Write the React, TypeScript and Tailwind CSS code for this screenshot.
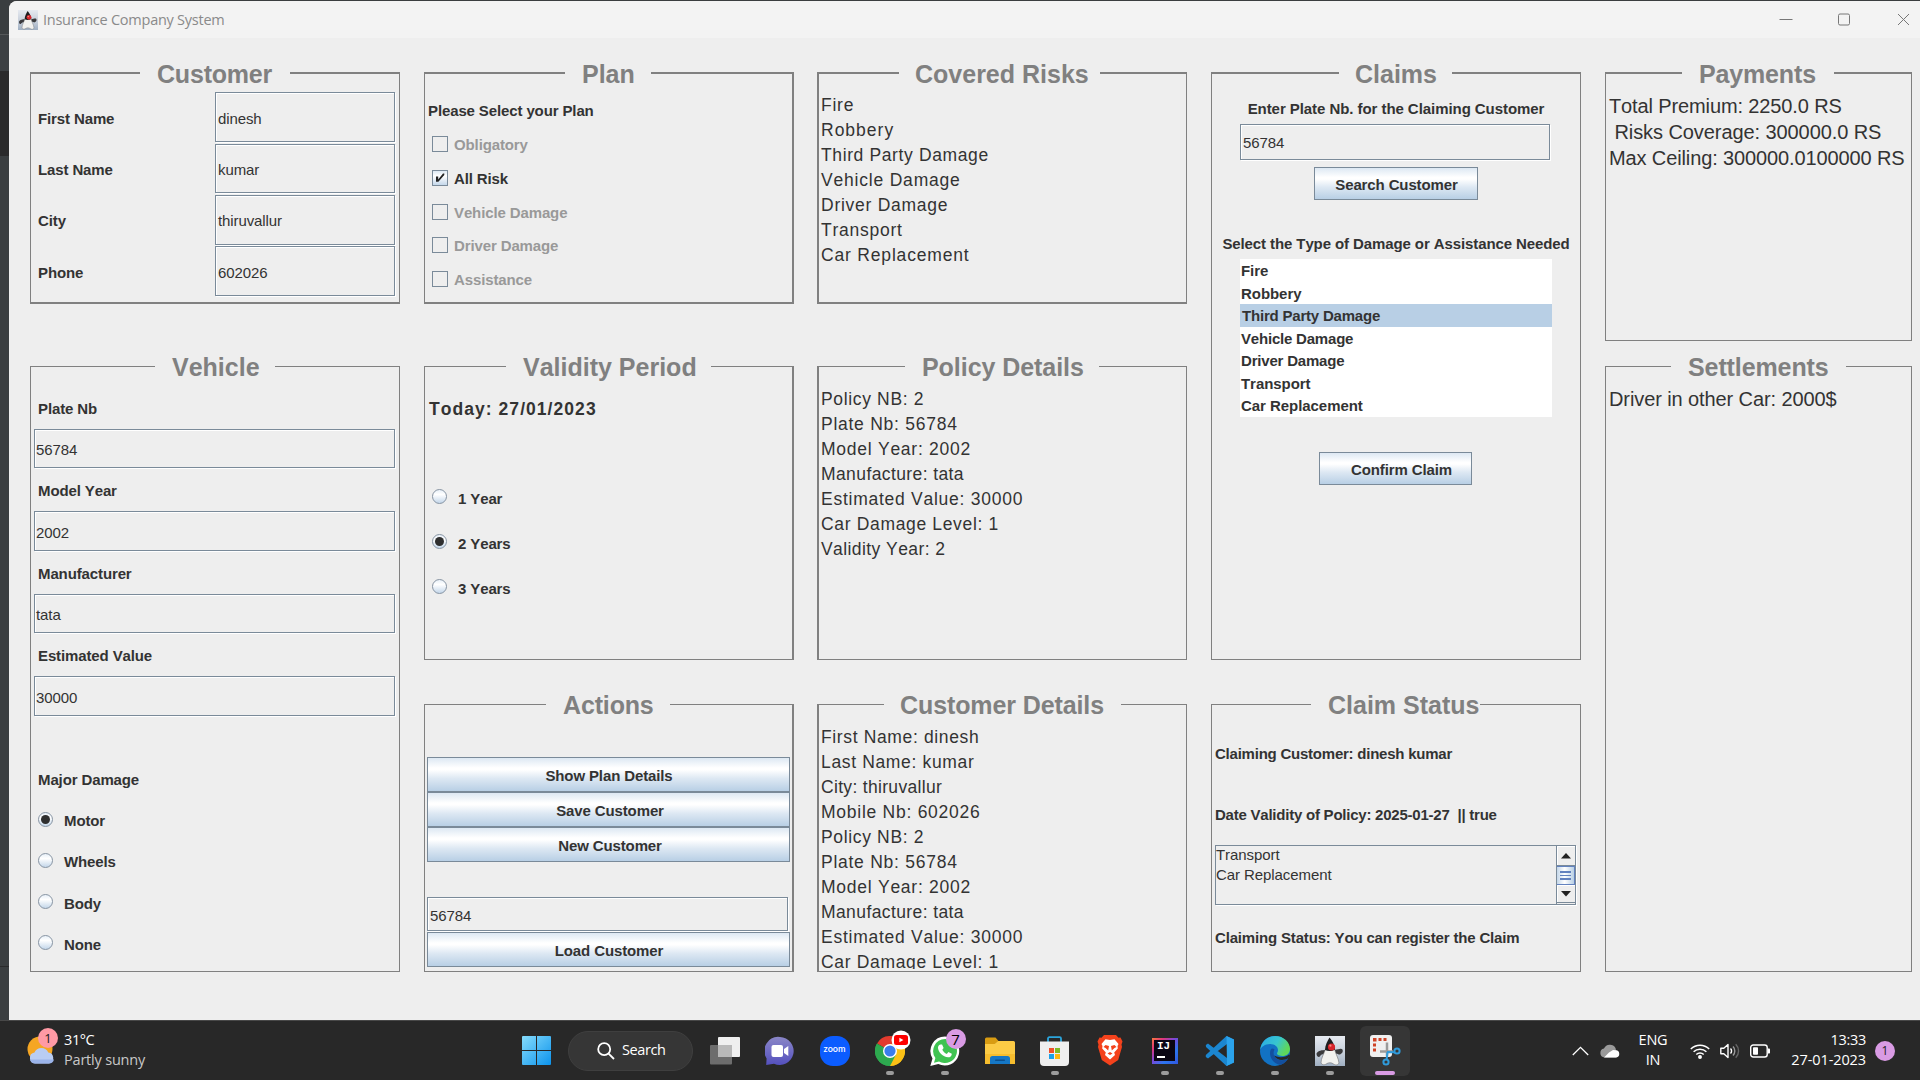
import type { ReactNode } from "react";

const INK = "text-[#333333]";

/* ---------- Metal look-and-feel widgets ---------- */

function Panel({
  title,
  className,
  left,
  gap,
  topLine = "border-t",
  titleClass = "-mt-[14px]",
  children,
}: {
  title: string;
  className: string;
  left: string;
  gap: string;
  topLine?: string;
  titleClass?: string;
  children: ReactNode;
}) {
  return (
    <section className={`flex shrink-0 flex-col border-[#808080] ${className}`}>
      <div className="flex h-0 shrink-0 items-start">
        <div className={`shrink-0 border-[#808080] ${topLine} ${left}`} />
        <h2
          className={`shrink-0 text-[25px] font-bold leading-[30px] whitespace-pre text-[#808080] ${gap} ${titleClass}`}
        >
          {title}
        </h2>
        <div className={`flex-1 border-[#808080] ${topLine}`} />
      </div>
      {children}
    </section>
  );
}

function Label({
  children,
  className = "",
  tracking = "tracking-[-0.12px]",
}: {
  children: ReactNode;
  className?: string;
  tracking?: string;
}) {
  return (
    <div className={`text-[15px] font-bold leading-5 whitespace-pre ${INK} ${tracking} ${className}`}>{children}</div>
  );
}

function Field({ value, className, pad = "pl-[2px]" }: { value: string; className: string; pad?: string }) {
  return (
    <div
      className={`flex shrink-0 items-center border border-[#7a8a99] text-[15px] leading-5 tracking-[-0.1px] shadow-[inset_1px_1px_0_#ffffff,1px_1px_0_#ffffff] ${pad} ${INK} ${className}`}
    >
      {value}
    </div>
  );
}

function MetalButton({ label, className }: { label: string; className: string }) {
  return (
    <button
      className={`flex shrink-0 items-center justify-center border border-[#7a8a99] bg-[linear-gradient(to_bottom,#dde8f3_0%,#ffffff_30%,#ffffff_36%,#dde8f3_62%,#b8cfe5_100%)] pt-[2px] text-[15px] font-bold leading-5 tracking-[-0.12px] ${INK} ${className}`}
    >
      {label}
    </button>
  );
}

function Radio({ label, checked }: { label: string; checked?: boolean }) {
  return (
    <div className="flex items-center">
      <span className="-mt-[4px] flex h-[15px] w-[15px] items-center justify-center rounded-full border-[1.5px] border-[#8794a3] bg-[linear-gradient(to_bottom,#e8f0f8,#ffffff_35%,#c4d7ea)]">
        {checked && <span className="h-[9px] w-[9px] rounded-full bg-[#2f2f2f]" />}
      </span>
      <Label className="ml-[11px]">{label}</Label>
    </div>
  );
}

function Check({ label, checked }: { label: string; checked?: boolean }) {
  return (
    <div className="flex h-[33.75px] items-start">
      <span
        className={`flex h-4 w-4 items-center justify-center border border-[#7a8a99] ${
          checked ? "bg-[linear-gradient(to_bottom,#dde8f3,#ffffff_35%,#c4d7ea)]" : ""
        }`}
      >
        {checked && (
          <svg width="12" height="12" viewBox="0 0 12 12">
            <path d="M2 4.500h2.200v3L9 1.500h1.300v1.400L4.400 9.800H2z" fill="#222" />
          </svg>
        )}
      </span>
      <Label className={`ml-[6px] -mt-[1px] ${checked ? "" : "!text-[#999999]"}`}>{label}</Label>
    </div>
  );
}

const lineTracking: Record<string, string> = {
  Robbery: "tracking-[1px]",
  "Third Party Damage": "tracking-[0.62px]",
  "Vehicle Damage": "tracking-[0.8px]",
  "Car Replacement": "tracking-[0.82px]",
  "Manufacture: tata": "tracking-[0.4px]",
  "Validity Year: 2": "tracking-[0.42px]",
  "City: thiruvallur": "tracking-[0.32px]",
  "First Name: dinesh": "tracking-[0.64px]",
  "Last Name: kumar": "tracking-[0.65px]",
  "Policy NB: 2": "tracking-[0.65px]",
  "Car Damage Level: 1": "tracking-[0.66px]",
};

function TextLines({ lines, className = "" }: { lines: string[]; className?: string }) {
  return (
    <div className={`overflow-hidden pl-[2px] text-[17.5px] leading-[25px] ${INK} ${className}`}>
      {lines.map((l) => (
        <div key={l} className={`whitespace-pre ${lineTracking[l] ?? "tracking-[0.74px]"}`}>
          {l}
        </div>
      ))}
    </div>
  );
}

/* ---------- Icons ---------- */

function Duke({ size }: { size: number }) {
  return (
    <svg width={size} height={size} viewBox="0 0 30 30">
      <defs>
        <linearGradient id="dukeBg" x1="0" y1="0" x2="0" y2="1">
          <stop offset="0" stopColor="#e6eaf0" />
          <stop offset=".6" stopColor="#c3ccd8" />
          <stop offset="1" stopColor="#9fafc2" />
        </linearGradient>
      </defs>
      <rect width="30" height="30" fill="url(#dukeBg)" />
      <path d="M11 14C7 14 3 14.500 1.500 17.500c0 2 1 3.500 2.500 3.500 1.500-.5 1-2.500 5-3z" fill="#3a3a3c" />
      <path d="M19.500 14c4-.5 6.500-2 8-.5 1 2-.5 4-2.500 5-1.500.5-2-1-4.500-1z" fill="#3a3a3c" />
      <path d="M10.500 13C9 18 6 22 6 27c1.500 2.500 4 2 6 .5 2-1 4.500-1 6 .2 2 1.500 5 2 6-.7C23.500 22 20.500 18 19.500 13z" fill="#f2f2ef" stroke="#6f6f70" strokeWidth=".6" />
      <path d="M14.500 1.500c2.500 3 5.500 7.500 5.500 12-3 2-7 2-10 .5 0-5 2.500-9 4.500-12.500z" fill="#1d1d1f" />
      <circle cx="16.500" cy="11" r="3.600" fill="#d8252b" />
      <circle cx="15.400" cy="9.700" r="1.100" fill="#f58a85" />
    </svg>
  );
}

function WindowsLogo() {
  return (
    <svg width="29" height="29" viewBox="0 0 29 29">
      <defs>
        <linearGradient id="win" x1="0" y1="0" x2="1" y2="1">
          <stop offset="0" stopColor="#86dcfc" />
          <stop offset="1" stopColor="#0c93ec" />
        </linearGradient>
      </defs>
      <path d="M1 0h13v14H0V1a1 1 0 0 1 1-1zM15 0h13a1 1 0 0 1 1 1v13H15zM0 15h14v14H1a1 1 0 0 1-1-1zM15 15h14v13a1 1 0 0 1-1 1H15z" fill="url(#win)" />
    </svg>
  );
}

function TaskView() {
  return (
    <svg width="30" height="28" viewBox="0 0 30 28">
      <rect x="8" y="0" width="22" height="20" rx="1" fill="#efefef" />
      <rect x="0" y="8" width="22" height="19.500" rx="1" fill="#6d6d6d" />
      <rect x="8" y="8" width="14" height="12" fill="#b9b9b9" />
    </svg>
  );
}

function Chat() {
  return (
    <svg width="30" height="30" viewBox="0 0 30 30">
      <defs>
        <linearGradient id="chat" x1="0" y1="0" x2="0" y2="1">
          <stop offset="0" stopColor="#8a86c6" />
          <stop offset=".5" stopColor="#706cc4" />
          <stop offset="1" stopColor="#5450bd" />
        </linearGradient>
      </defs>
      <path d="M15 1a14 14 0 1 1-6 26.800L1.200 29l.4-6.500A14 14 0 0 1 15 1z" fill="url(#chat)" />
      <rect x="6.500" y="9" width="11.500" height="12" rx="2" fill="#fff" />
      <path d="M19 13l4.300-3v10L19 17z" fill="#fff" />
    </svg>
  );
}

function Zoom() {
  return (
    <div className="flex h-[30px] w-[30px] items-center justify-center rounded-[13px] bg-[#0b5cff]">
      <span className="mb-[3px] font-['Lato'] text-[9px] font-semibold leading-3 text-white">zoom</span>
    </div>
  );
}

function Chrome() {
  return (
    <div className="relative h-[30px] w-[30px]">
      <svg width="30" height="30" viewBox="0 0 30 30">
        <path d="M15 15L2 7.500A15 15 0 0 1 28 7.500z" fill="#e33b2e" />
        <path d="M15 15L28 7.500A15 15 0 0 1 15 30z" fill="#fbc116" />
        <path d="M15 15v15A15 15 0 0 1 2 7.500z" fill="#2da94f" />
        <path d="M15 8h13.200a15 15 0 0 1-13.200 22l6.200-11.500z" fill="#fbc116" />
        <path d="M9 18.500L2 7.500A15 15 0 0 0 15 30l6-11.500z" fill="#2da94f" />
        <circle cx="15" cy="15" r="7" fill="#fff" />
        <circle cx="15" cy="15" r="5.600" fill="#3b7ded" />
      </svg>
      <svg width="20" height="20" viewBox="0 0 20 20" className="absolute -top-[6px] left-[16px]">
        <circle cx="10" cy="10" r="9.500" fill="#fff" />
        <rect x="3" y="5" width="14" height="10" rx="2.500" fill="#f00" />
        <path d="M8.400 7.700v4.600l4-2.300z" fill="#fff" />
      </svg>
    </div>
  );
}

function WhatsApp() {
  return (
    <div className="relative h-[30px] w-[30px]">
      <svg width="30" height="30" viewBox="0 0 30 30">
        <path d="M15 .5A14.500 14.500 0 1 1 8.300 28L.3 30l2.200-7.600A14.500 14.500 0 0 1 15 .5z" fill="#fff" />
        <path d="M15 3a12 12 0 1 1-6 22.400l-5 1.300 1.400-4.800A12 12 0 0 1 15 3z" fill="#3fc351" />
        <path d="M10.800 8.500l1.300.1 1.500 3.400-1.300 1.800c1 2 2.400 3.300 4.500 4.200l1.600-1.900 3.400 1.600c0 2.500-1.700 3.600-3.700 3.600-5 0-10.300-5.500-10.100-9.700.1-1.600 1-3 2.800-3.100z" fill="#fff" />
      </svg>
      <span className="absolute -top-[7px] left-[16px] flex h-5 w-5 items-center justify-center rounded-full bg-[#d99be4] text-[15px] leading-5 text-black">
        7
      </span>
    </div>
  );
}

function Explorer() {
  return (
    <svg width="30" height="28" viewBox="0 0 30 28">
      <path d="M0 2a1.500 1.500 0 0 1 1.500-1.500h9L13.500 4 10 7H0z" fill="#d99c12" />
      <path d="M0 7h9.500l3.500-3h15.500A1.500 1.500 0 0 1 30 5.500V27H0z" fill="#fccb45" />
      <path d="M0 17h30v10H0z" fill="#f6bd2e" />
      <path d="M5 27v-5.500A2.500 2.500 0 0 1 7.500 19h15a2.500 2.500 0 0 1 2.500 2.500V27z" fill="#1577c6" />
      <rect x="10" y="22.500" width="10" height="1.500" rx=".7" fill="#0b4f8e" />
    </svg>
  );
}

function Store() {
  return (
    <svg width="29" height="30" viewBox="0 0 29 30">
      <path d="M8 6V2.500A1.300 1.300 0 0 1 9.300 1.200h10.400A1.300 1.300 0 0 1 21 2.500V6" fill="none" stroke="#2ba5dc" strokeWidth="1.800" />
      <path d="M0 5.500h29V26a4 4 0 0 1-4 4H4a4 4 0 0 1-4-4z" fill="#efefef" />
      <rect x="9" y="12" width="5" height="5" fill="#f0512a" />
      <rect x="15" y="12" width="5" height="5" fill="#7fba27" />
      <rect x="9" y="18" width="5" height="5" fill="#1ca1e8" />
      <rect x="15" y="18" width="5" height="5" fill="#fdb813" />
    </svg>
  );
}

function Brave() {
  return (
    <svg width="26" height="31" viewBox="0 0 26 31">
      <path d="M7 0h12l2.500 2.700 2-.2 2 4-1 3L25 12l-3.800 13L13 30.500 4.800 25 1 12l.5-2.500-1-3 2-4 2 .2z" fill="#f4421c" />
      <path d="M13 5l4.500-.8L21.500 9l-1 2 .3 2.500-3.600 4 .8 2.500-5 4.500L8 20l.8-2.500-3.600-4 .3-2.500-1-2 4-4.800z" fill="#fff" />
      <path d="M8.500 10l3.500 1-.8 4.500L8.500 13l-2-1zM17.500 10l-3.500 1 .8 4.500 2.700-2.500 2-1zM10.500 18.500L13 17l2.500 1.500L13 20z" fill="#f4421c" />
    </svg>
  );
}

function IntelliJ() {
  return (
    <div className="flex h-[26px] w-[26px] items-center justify-center bg-[linear-gradient(135deg,#f97a3c_0%,#e0367a_22%,#7a47d8_45%,#2c76f0_70%,#3156e0_100%)]">
      <div className="flex h-[21px] w-[21px] flex-col bg-[#0a0614] pl-[3px] pt-[1px]">
        <span className="font-['Liberation_Mono'] text-[11px] font-bold leading-[11px] text-white">IJ</span>
        <span className="mt-[4px] h-[1.5px] w-[8px] bg-white" />
      </div>
    </div>
  );
}

function VsCode() {
  return (
    <svg width="30" height="30" viewBox="0 0 30 30">
      <path d="M21.500 0L29 3.500v23L21.500 30 1 11 .8 9 3 7.600 22 22V8L3 22.400.8 21V19z" fill="#1b86d0" />
      <path d="M21.500 0L29 3.500v23L21.500 30l.5-2z" fill="#2ba3ec" />
    </svg>
  );
}

function Edge() {
  return (
    <svg width="30" height="30" viewBox="0 0 30 30">
      <defs>
        <linearGradient id="edgeA" x1="0" y1="0" x2="1" y2=".4">
          <stop offset="0" stopColor="#2aa8e6" />
          <stop offset=".6" stopColor="#37c6cf" />
          <stop offset="1" stopColor="#5fd75a" />
        </linearGradient>
      </defs>
      <circle cx="15" cy="15" r="15" fill="#1272c4" />
      <path d="M.2 14C1 6 7 0 15 0c9 0 15 6.500 15 13 0 4.500-3.500 7-7.500 7-3 0-5.500-1-5.500-2.500 0-1 1-1.500 1-3.500 0-3-3-6-8-6-5 0-9 3-9.800 6z" fill="url(#edgeA)" />
      <path d="M11 13c-3 6 1 14 9 16 3.500-1 6.500-3.500 8-6.500-5 3-12 2-14-3-.8-2.500-.3-4.500.5-6-1-1-2.500-1.500-3.500-.5z" fill="#134f9e" />
      <path d="M28.200 22.300c-5 3-12.200 2-14.200-3 0 0 1 1 3.500 1.500 3 .8 9 .5 11.300-2.300l1.200 1z" fill="#282828" />
    </svg>
  );
}

function Snip() {
  return (
    <svg width="32" height="31" viewBox="0 0 32 31">
      <rect x="1" y="0" width="22" height="22" rx="3" fill="#f0f0f0" />
      <path d="M4 3h3.500v3.500H4zM9.500 3h3v3h-3zM14.500 3h3v3h-3zM4 8.500h3v3H4zM4 13.500h3v3H4z" fill="#cf4326" />
      <path d="M18 7.500v14M11 16.500h13" fill="none" stroke="#9a9a9a" strokeWidth="2.500" />
      <path d="M18 17l7.500.3M18.500 17l-.8 7" fill="none" stroke="#2f9bdc" strokeWidth="2" />
      <circle cx="28" cy="16" r="2.600" fill="none" stroke="#2f9bdc" strokeWidth="2" />
      <circle cx="17" cy="27" r="2.600" fill="none" stroke="#2f9bdc" strokeWidth="2" />
    </svg>
  );
}

function TaskSlot({ children, running, active }: { children: ReactNode; running?: boolean; active?: boolean }) {
  return (
    <div className="flex w-[55px] justify-center">
      <div className={`relative flex h-[50px] w-[50px] items-center justify-center rounded-md ${active ? "bg-[#363636]" : ""}`}>
        {children}
        {running && <span className="absolute bottom-[1px] left-[21px] h-1 w-2 rounded-full bg-[#9c9c9c]" />}
        {active && <span className="absolute bottom-[1px] left-[15px] h-1 w-5 rounded-full bg-[#d99be4]" />}
      </div>
    </div>
  );
}

/* ---------- Data ---------- */

const customer = [
  ["First Name", "dinesh", "h-[52px]", "h-[50px]", "pt-[3px]"],
  ["Last Name", "kumar", "h-[51px]", "h-[49px]", "pt-[3px]"],
  ["City", "thiruvallur", "h-[51px]", "h-[50px]", "pt-[1px]"],
  ["Phone", "602026", "h-[50px]", "h-[50px]", "pt-[3px]"],
];

const vehicle = [
  ["Plate Nb", "56784"],
  ["Model Year", "2002"],
  ["Manufacturer", "tata"],
  ["Estimated Value", "30000"],
];

const risks = [
  "Fire",
  "Robbery",
  "Third Party Damage",
  "Vehicle Damage",
  "Driver Damage",
  "Transport",
  "Car Replacement",
];

const policy = [
  "Policy NB: 2",
  "Plate Nb: 56784",
  "Model Year: 2002",
  "Manufacture: tata",
  "Estimated Value: 30000",
  "Car Damage Level: 1",
];

/* ---------- Page ---------- */

export default function App() {
  return (
    <div className="flex h-[1080px] w-[1920px] flex-col overflow-hidden bg-[#3a3d3f] font-['Liberation_Sans',sans-serif] [font-kerning:none]">
      <div className="flex h-[1020px]">
        <div className="flex w-[9px] shrink-0 flex-col bg-[#3a3e40]">
          <div className="h-[35px] border-b border-[#55585a]" />
          <div className="h-[36px] bg-[#3c4043]" />
          <div className="h-[85px] bg-[#2a2a2b]" />
          <div className="flex-1" />
          <div className="h-[54px] border-t border-[#2a2a2b]" />
        </div>

        <div className="mt-px flex flex-1 flex-col overflow-hidden rounded-tl-lg bg-[#eeeeee]">
          <header className="flex h-[37px] shrink-0 items-center bg-[#f3f3f3] pl-[9px] font-['Open_Sans',sans-serif]">
            <Duke size={20} />
            <span className="ml-[5px] text-[14.5px] leading-5 tracking-[-0.25px] text-[#8a8a8a]">
              Insurance Company System
            </span>
            <svg width="140" height="16" viewBox="0 0 140 16" className="ml-auto mr-[4px]" fill="none" stroke="#777" strokeWidth="1">
              <path d="M3.500 7.500h13" />
              <rect x="62.500" y="2" width="11" height="11" rx="1.500" />
              <path d="M122 2l11 11M133 2l-11 11" />
            </svg>
          </header>

          <main className="flex flex-1 pl-[21px] pt-[34px]">
            {/* Customer + Vehicle */}
            <div className="flex w-[370px] shrink-0 flex-col">
              <Panel
                title="Customer"
                className="h-[232px] border-x border-b-2"
                left="w-[109px]"
                gap="w-[150px] pl-[17px] tracking-[-0.2px]"
                topLine="border-t-2"
                titleClass="-mt-[13px]"
              >
                <div className="flex flex-col pl-[7px] pt-[20px]">
                  {customer.map(([label, value, row, field, pad]) => (
                    <div key={label} className={`flex items-start ${row}`}>
                      <div className={`flex w-[177px] items-center ${pad} ${field}`}>
                        <Label>{label}</Label>
                      </div>
                      <Field value={value} className={`w-[180px] ${pad} ${field}`} />
                    </div>
                  ))}
                </div>
              </Panel>

              <Panel title="Vehicle" className="mt-[62px] h-[606px] border-x border-b" left="w-[124px]" gap="w-[120px] pl-[17px]">
                <div className="flex flex-col pl-[3px] pt-[21.6px]">
                  {vehicle.map(([label, value]) => (
                    <div key={label} className="flex flex-col">
                      <div className="flex h-[41.25px] items-center pl-[4px] pt-[1px]">
                        <Label>{label}</Label>
                      </div>
                      <div className="flex h-[41.25px] items-start">
                        <Field value={value} pad="pl-[1px]" className="h-[39.5px] w-[361px] pt-[3px]" />
                      </div>
                    </div>
                  ))}
                  <div className="h-[41.25px]" />
                  <div className="flex h-[41.25px] items-center pl-[4px] pt-[1px]">
                    <Label>Major Damage</Label>
                  </div>
                  {["Motor", "Wheels", "Body", "None"].map((d) => (
                    <div key={d} className="flex h-[41.25px] items-center pl-[4px] pt-[1px]">
                      <Radio label={d} checked={d === "Motor"} />
                    </div>
                  ))}
                </div>
              </Panel>
            </div>

            {/* Plan + Validity + Actions */}
            <div className="ml-[24px] flex w-[370px] shrink-0 flex-col">
              <Panel
                title="Plan"
                className="h-[232px] border-l border-r-2 border-b-2"
                left="w-[140px]"
                gap="w-[86px] pl-[17px]"
                topLine="border-t-2"
                titleClass="-mt-[13px]"
              >
                <Label className="pl-[3px] pt-[29px]">Please Select your Plan</Label>
                <div className="flex flex-col pl-[7px] pt-[15px]">
                  <Check label="Obligatory" />
                  <Check label="All Risk" checked />
                  <Check label="Vehicle Damage" />
                  <Check label="Driver Damage" />
                  <Check label="Assistance" />
                </div>
              </Panel>

              <Panel
                title="Validity Period"
                className="mt-[62px] h-[294px] border-l border-r-2 border-b"
                left="w-[81px]"
                gap="w-[205px] pl-[17px]"
              >
                <div className={`pl-[4px] pt-[31px] text-[17.5px] font-bold leading-[25px] tracking-[1.05px] ${INK}`}>
                  Today: 27/01/2023
                </div>
                <div className="flex flex-col pl-[7px] pt-[54px]">
                  {["1 Year", "2 Years", "3 Years"].map((y) => (
                    <div key={y} className="flex h-[45px] items-center">
                      <Radio label={y} checked={y === "2 Years"} />
                    </div>
                  ))}
                </div>
              </Panel>

              <Panel
                title="Actions"
                className="mt-[44px] h-[268px] border-l border-r-2 border-b"
                left="w-[121px]"
                gap="w-[124px] pl-[17px] tracking-[-0.15px]"
              >
                <div className="flex flex-col pl-[2px] pt-[53px]">
                  <MetalButton label="Show Plan Details" className="h-[35px] w-[363px] pl-[1px]" />
                  <MetalButton label="Save Customer" className="h-[35px] w-[363px] pl-[3px]" />
                  <MetalButton label="New Customer" className="h-[35px] w-[363px] pl-[3px]" />
                  <Field value="56784" className="mt-[35px] h-[34px] w-[361px] pt-[3px]" />
                  <MetalButton label="Load Customer" className="mt-[1px] h-[35px] w-[363px] pl-[1px]" />
                </div>
              </Panel>
            </div>

            {/* Risks + Policy + Customer details */}
            <div className="ml-[23px] flex w-[370px] shrink-0 flex-col">
              <Panel
                title="Covered Risks"
                className="h-[232px] border-l-2 border-r border-b-2"
                left="w-[80px]"
                gap="w-[201px] pl-[16px]"
                topLine="border-t-2"
                titleClass="-mt-[13px]"
              >
                <TextLines lines={risks} className="mt-[21px]" />
              </Panel>
              <Panel
                title="Policy Details"
                className="mt-[62px] h-[294px] border-l-2 border-r border-b"
                left="w-[86px]"
                gap="w-[194px] pl-[17px] tracking-[-0.05px]"
              >
                <TextLines lines={[...policy, "Validity Year: 2"]} className="mt-[21px]" />
              </Panel>
              <Panel
                title="Customer Details"
                className="mt-[44px] h-[268px] border-l-2 border-r border-b"
                left="w-[65px]"
                gap="w-[237px] pl-[16px] tracking-[-0.1px]"
              >
                <TextLines
                  lines={["First Name: dinesh", "Last Name: kumar", "City: thiruvallur", "Mobile Nb: 602026", ...policy]}
                  className="mt-[21px] h-[244px]"
                />
              </Panel>
            </div>

            {/* Claims */}
            <div className="ml-[24px] flex w-[370px] shrink-0 flex-col">
              <Panel
                title="Claims"
                className="h-[588px] border-x border-b"
                left="w-[127px]"
                gap="w-[113px] pl-[16px]"
                topLine="border-t-2"
                titleClass="-mt-[13px]"
              >
                <div className="flex flex-col items-center pt-[27px]">
                  <Label tracking="tracking-[-0.06px]">Enter Plate Nb. for the Claiming Customer</Label>
                  <Field value="56784" className="mt-[5px] mr-[2px] h-[36px] w-[310px] pt-[2px]" />
                  <MetalButton label="Search Customer" className="mt-[7px] h-[33px] w-[164px] pl-[1px]" />
                  <Label className="mt-[34px]" tracking="tracking-[-0.1px]">
                    Select the Type of Damage or Assistance Needed
                  </Label>
                  <ul className="mt-[5px] w-[312px] bg-white">
                    {risks.map((r) => (
                      <li
                        key={r}
                        className={`flex h-[22.5px] items-center pt-[2px] ${
                          r === "Third Party Damage" ? "bg-[#b8cfe5] pl-[2px]" : "pl-[1px]"
                        }`}
                      >
                        <Label tracking={r.includes("Damage") ? "tracking-[-0.2px]" : "tracking-[-0.05px]"}>{r}</Label>
                      </li>
                    ))}
                  </ul>
                  <MetalButton label="Confirm Claim" className="mt-[35.5px] mr-[1px] h-[33px] w-[153px] pl-[12px]" />
                </div>
              </Panel>
              <Panel title="Claim Status" className="mt-[44px] h-[268px] border-x border-b" left="w-[99px]" gap="w-[169px] pl-[17px]">
                <div className="flex flex-col pl-[3px] pt-[40px]">
                  <Label tracking="tracking-[-0.23px]">Claiming Customer: dinesh kumar</Label>
                  <Label className="mt-[41px]" tracking="tracking-[-0.23px]">
                    {"Date Validity of Policy: 2025-01-27  || true"}
                  </Label>
                  <div className="mt-[20px] flex h-[60px] w-[361px] border border-[#7a8a99] shadow-[1px_1px_0_#ffffff]">
                    <div className={`-mt-px flex-1 text-[15px] leading-5 tracking-[-0.08px] ${INK}`}>
                      <div>Transport</div>
                      <div>Car Replacement</div>
                    </div>
                    <div className="flex w-[19px] flex-col border-l border-[#7a8a99]">
                      <div className="flex h-[20px] items-center justify-center border-b border-[#7a8a99] shadow-[inset_1px_1px_0_#ffffff]">
                        <svg width="10" height="6" viewBox="0 0 10 6" className="mr-px">
                          <path d="M5 0l5 5.500H0z" fill="#222" />
                        </svg>
                      </div>
                      <div className="flex h-[19px] flex-col items-center justify-center gap-[2px] border border-l-0 border-[#6382bf] bg-[linear-gradient(to_right,#c4d7ea,#ffffff_45%,#b8cfe5)]">
                        <span className="h-[1.5px] w-[11px] bg-[#6382bf]" />
                        <span className="h-[1.5px] w-[11px] bg-[#6382bf]" />
                        <span className="h-[1.5px] w-[11px] bg-[#6382bf]" />
                      </div>
                      <div className="flex h-[18px] items-center justify-center border-b border-[#7a8a99] shadow-[inset_1px_1px_0_#ffffff]">
                        <svg width="10" height="6" viewBox="0 0 10 6" className="mr-px">
                          <path d="M0 0h10L5 5.500z" fill="#222" />
                        </svg>
                      </div>
                    </div>
                  </div>
                  <Label className="mt-[23px]" tracking="tracking-[-0.17px]">
                    Claiming Status: You can register the Claim
                  </Label>
                </div>
              </Panel>
            </div>

            {/* Payments + Settlements */}
            <div className="ml-[24px] flex w-[307px] shrink-0 flex-col">
              <Panel
                title="Payments"
                className="h-[269px] border-x border-b"
                left="w-[76px]"
                gap="w-[152px] pl-[17px] tracking-[-0.15px]"
                topLine="border-t-2"
                titleClass="-mt-[13px]"
              >
                <div className={`pl-[3px] pt-[21px] text-[20px] leading-[26px] tracking-[-0.12px] whitespace-pre ${INK}`}>
                  <div>Total Premium: 2250.0 RS</div>
                  <div className="tracking-[-0.08px]">{" Risks Coverage: 300000.0 RS"}</div>
                  <div>Max Ceiling: 300000.0100000 RS</div>
                </div>
              </Panel>
              <Panel title="Settlements" className="mt-[25px] h-[606px] border-x border-b" left="w-[65px]" gap="w-[175px] pl-[17px] tracking-[-0.1px]">
                <div className={`pl-[3px] pt-[20px] text-[20px] leading-[26px] tracking-[-0.1px] ${INK}`}>
                  Driver in other Car: 2000$
                </div>
              </Panel>
            </div>
          </main>
        </div>
      </div>

      {/* Taskbar */}
      <footer className="flex h-[60px] shrink-0 border-t border-[#484848] bg-[#282828] font-['Open_Sans',sans-serif] text-[14.5px] leading-5 text-white">
        <div className="flex w-[507px] items-start pl-[27px]">
          <div className="relative mt-[15px] h-[30px] w-[28px]">
            <svg width="28" height="28" viewBox="0 0 28 28">
              <circle cx="13" cy="13" r="12.500" fill="#f5a623" />
              <path d="M8 27.500a5.500 5.500 0 0 1-.5-10.900 7.500 7.500 0 0 1 13.800-.1 5.600 5.600 0 0 1 .7 11z" fill="#b9cdf3" />
              <path d="M8 27.500a5.500 5.500 0 0 1-5-4h24a5.500 5.500 0 0 1-5 4z" fill="#9bb4ea" />
            </svg>
            <span className="absolute -top-[8px] left-[11px] flex h-5 w-5 items-center justify-center rounded-full bg-[#ff9aa5] text-[13px] text-[#222]">
              1
            </span>
          </div>
          <div className="ml-[9px] mt-[9px] flex flex-col tracking-[-0.2px]">
            <span className="tracking-[-0.4px]">31°C</span>
            <span className="text-[#c8c8c8]">Partly sunny</span>
          </div>
        </div>

        <div className="flex h-full items-center">
          <div className="flex w-[61px] justify-center pr-[3px]">
            <WindowsLogo />
          </div>
          <div className="flex h-10 w-[125px] items-center rounded-full border border-[#3f3f3f] bg-[#363636] pl-[28px]">
            <svg width="18" height="18" viewBox="0 0 18 18" fill="none" stroke="#fff" strokeWidth="1.800">
              <circle cx="7.200" cy="7.200" r="6" />
              <path d="M11.600 11.600L17 17" />
            </svg>
            <span className="-mt-[2px] ml-[7px] text-[14.5px] tracking-[-0.4px]">Search</span>
          </div>
          <div className="ml-[4px] flex">
            <TaskSlot><TaskView /></TaskSlot>
            <TaskSlot><Chat /></TaskSlot>
            <TaskSlot><Zoom /></TaskSlot>
            <TaskSlot running><Chrome /></TaskSlot>
            <TaskSlot running><WhatsApp /></TaskSlot>
            <TaskSlot><Explorer /></TaskSlot>
            <TaskSlot running><Store /></TaskSlot>
            <TaskSlot><Brave /></TaskSlot>
            <TaskSlot running><IntelliJ /></TaskSlot>
            <TaskSlot running><VsCode /></TaskSlot>
            <TaskSlot running><Edge /></TaskSlot>
            <TaskSlot running><Duke size={30} /></TaskSlot>
            <TaskSlot active><Snip /></TaskSlot>
          </div>
        </div>

        <div className="ml-auto flex h-full items-center pr-[25px]">
          <svg width="17" height="10" viewBox="0 0 17 10" fill="none" stroke="#fff" strokeWidth="1.300">
            <path d="M.8 9l7.700-7.700L16.200 9" />
          </svg>
          <svg width="20" height="14" viewBox="0 0 20 14" className="ml-[11px]">
            <path d="M4.500 13.500A4.500 4.500 0 0 1 4 4.600 6.500 6.500 0 0 1 15.500 4l.5 2.200A4 4 0 0 1 16 13.500z" fill="#9a9a9a" />
            <path d="M4 13.500L9 8.500l4-2.500 3 .2a3.700 3.700 0 0 1 .3 7.300z" fill="#fff" />
          </svg>
          <div className="-mt-[2px] ml-[18px] flex w-[30px] flex-col items-center tracking-[-0.2px]">
            <span>ENG</span>
            <span>IN</span>
          </div>
          <svg width="20" height="16" viewBox="0 0 20 16" className="ml-[22px]" fill="none" stroke="#fff" strokeWidth="1.500">
            <path d="M.8 6a13 13 0 0 1 18.400 0M3.600 8.800a9 9 0 0 1 12.800 0M6.300 11.500a5.200 5.200 0 0 1 7.400 0" />
            <circle cx="10" cy="14" r="1.200" fill="#fff" />
          </svg>
          <svg width="20" height="16" viewBox="0 0 20 16" className="ml-[10px]" fill="none" stroke="#fff" strokeWidth="1.400">
            <path d="M.8 5.300h3L8 1.500v13l-4.200-3.800h-3z" strokeLinejoin="round" />
            <path d="M10.500 5.500a3.500 3.500 0 0 1 0 5" />
            <path d="M13 3.500a6.500 6.500 0 0 1 0 9" stroke="#999" />
            <path d="M15.700 1.200a9.500 9.500 0 0 1 0 13.600" stroke="#666" />
          </svg>
          <svg width="20" height="14" viewBox="0 0 20 14" className="ml-[10px]">
            <rect x=".7" y="1" width="16.500" height="12" rx="2.500" fill="none" stroke="#fff" strokeWidth="1.400" />
            <rect x="3" y="3.300" width="5" height="7.400" rx=".8" fill="#fff" />
            <path d="M18 4.500h1.200a.8.8 0 0 1 .8.800v3.400a.8.8 0 0 1-.8.800H18z" fill="#fff" />
          </svg>
          <div className="-mt-[2px] ml-[20px] flex w-[76px] flex-col items-end tracking-[-0.1px] whitespace-nowrap">
            <span className="tracking-[-0.3px]">13:33</span>
            <span>27-01-2023</span>
          </div>
          <span className="ml-[9px] flex h-5 w-5 items-center justify-center rounded-full bg-[#d99be4] text-[12px] text-[#222]">1</span>
        </div>
      </footer>
    </div>
  );
}
